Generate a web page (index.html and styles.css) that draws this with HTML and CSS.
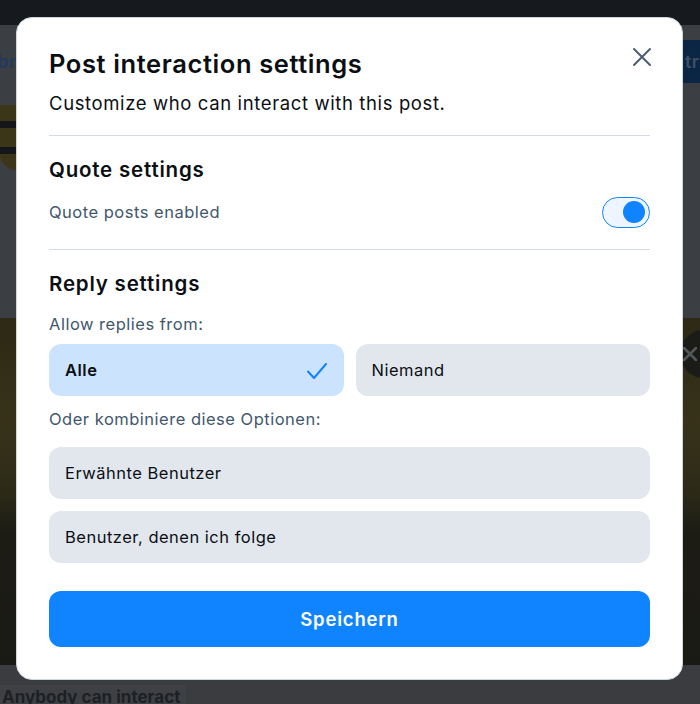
FILE: index.html
```html
<!DOCTYPE html>
<html lang="de">
<head>
<meta charset="utf-8">
<title>Post interaction settings</title>
<link rel="stylesheet" href="styles.css">
</head>
<body>
<div class="page">
  <div class="topbar"></div>
  <div class="header">
    <div class="header-row">
      <span class="header-left">br</span>
      <span class="header-btn">tra</span>
    </div>
    <div class="banner">
      <div class="stripe"></div>
      <div class="stripe"></div>
    </div>
  </div>
  <div class="media">
    <div class="media-close">
      <svg width="14" height="14" viewBox="0 0 14 14"><path d="M1 1 L13 13 M13 1 L1 13" stroke="#55585b" stroke-width="2.5" stroke-linecap="round" fill="none"/></svg>
    </div>
  </div>
  <div class="footer">
    <span class="footer-pill">Anybody can interact</span>
  </div>
</div>

<div class="modal" role="dialog">
  <button class="close" aria-label="Close">
    <svg width="20" height="20" viewBox="0 0 20 20"><path d="M2 2 L18 18 M18 2 L2 18" stroke="#4b5e73" stroke-width="2" stroke-linecap="round" fill="none"/></svg>
  </button>
  <h1 class="title">Post interaction settings</h1>
  <p class="subtitle">Customize who can interact with this post.</p>
  <div class="divider first"></div>
  <h2 class="section-title">Quote settings</h2>
  <div class="toggle-row">
    <span class="muted">Quote posts enabled</span>
    <span class="toggle"><span class="knob"></span></span>
  </div>
  <div class="divider second"></div>
  <h2 class="section-title">Reply settings</h2>
  <div class="label first-label">Allow replies from:</div>
  <div class="choice-row">
    <div class="choice selected">
      <span>Alle</span>
      <svg width="22" height="18" viewBox="0 0 22 18"><path d="M2 9.5 L8 16 L20 2" stroke="#1083fe" stroke-width="2" stroke-linecap="round" stroke-linejoin="round" fill="none"/></svg>
    </div>
    <div class="choice">
      <span>Niemand</span>
    </div>
  </div>
  <div class="label second-label">Oder kombiniere diese Optionen:</div>
  <div class="option first-option">Erwähnte Benutzer</div>
  <div class="option second-option">Benutzer, denen ich folge</div>
  <button class="save">Speichern</button>
</div>
</body>
</html>
```

FILE: styles.css
```css
* { box-sizing: border-box; }
html, body { margin: 0; padding: 0; }
body {
  width: 700px;
  height: 704px;
  overflow: hidden;
  font-family: Inter, "Noto Sans", "Liberation Sans", sans-serif;
  background: #3b3e43;
}

/* backdrop page (already dimmed) */
.page { width: 700px; height: 704px; display: flex; flex-direction: column; }
.topbar { height: 25px; background: #16191d; flex: none; }
.header { height: 293px; background: #3b3e43; flex: none; display: flex; flex-direction: column; }
.header-row { display: flex; justify-content: space-between; align-items: center; margin-top: 15px; height: 43px; }
.header-left { font-size: 18px; font-weight: 600; color: #1f3a63; margin-left: -3px; letter-spacing: 0.5px; }
.header-btn {
  background: #0b2545; color: #3f4f66; height: 43px; width: 17px; display: flex; align-items: center;
  padding-left: 2px; font-size: 18px; font-weight: 600; white-space: nowrap; overflow: hidden; letter-spacing: 0.5px;
}
.banner { margin-top: 22px; width: 30px; height: 65px; background: #3b3618; border-radius: 0 12px 12px 16px; display: flex; flex-direction: column; gap: 19px; padding-top: 16px; }
.stripe { height: 7px; background: #14161a; }
.media {
  height: 347px; flex: none; position: relative; overflow: hidden;
  background: linear-gradient(180deg, #2c2914 0%, #38321a 30%, #2c2a17 50%, #1c1c15 62%, #1a1a14 100%);
}
.media-close {
  position: absolute; left: 680px; top: 12px; width: 48px; height: 48px; border-radius: 50%;
  background: #1b1c18; display: flex; align-items: center; padding-left: 3px;
}
.media-close svg { display: block; }
.footer { flex: 1; background: #3a3c40; display: flex; align-items: flex-start; }
.footer-pill { margin-top: 20px; padding: 0 6px 0 2px; background: #3e4044; color: #1d2025; font-size: 17px; font-weight: 700; line-height: 24px; }

/* modal */
.modal {
  position: fixed; left: 16px; top: 17px; width: 667px; height: 663px;
  background: #ffffff; border: 1px solid #cfd5dd; border-radius: 16px;
  padding: 32px; display: flex; flex-direction: column;
}
.close {
  position: absolute; top: 29px; right: 30px; width: 20px; height: 20px; padding: 0; border: 0; background: none;
}
.close svg { display: block; }
.title { margin: 0; font-size: 25.5px; line-height: 28px; font-weight: 600; color: #0b0f14; letter-spacing: 0.6px; }
.subtitle { margin: 13px 0 0; font-size: 18.5px; line-height: 24px; color: #0b0f14; letter-spacing: 0.62px; }
.divider { height: 1px; background: #d4dbe2; }
.divider.first { margin-top: 20px; }
.divider.second { margin-top: 21px; }
.section-title { margin: 20px 0 0; font-size: 20.5px; line-height: 28px; font-weight: 600; color: #0b0f14; letter-spacing: 0.8px; }
.toggle-row { margin-top: 12px; display: flex; justify-content: space-between; align-items: center; height: 32px; }
.muted { font-size: 16.5px; color: #42576c; letter-spacing: 0.5px; }
.toggle {
  width: 48px; height: 31px; border-radius: 16px; border: 1px solid #1083fe; background: #eef5ff;
  display: flex; align-items: center; justify-content: flex-end; padding-right: 4px;
}
.knob { width: 22px; height: 22px; border-radius: 50%; background: #1083fe; }
.label { font-size: 16.5px; line-height: 24px; color: #42576c; letter-spacing: 0.5px; }
.first-label { margin-top: 14px; }
.second-label { margin-top: 11px; }
.choice-row { margin-top: 8px; display: flex; gap: 12px; }
.choice {
  flex: 1; height: 52px; border-radius: 12px; background: #e2e7ed; color: #0b0f14;
  display: flex; align-items: center; justify-content: space-between; padding: 0 16px; font-size: 16.5px; letter-spacing: 0.5px;
}
.choice.selected { background: #cce3fd; font-weight: 600; }
.choice.selected svg { margin-top: 1px; }
.option {
  height: 52px; border-radius: 12px; background: #e2e7ed; color: #0b0f14;
  display: flex; align-items: center; padding: 0 16px; font-size: 16.5px; letter-spacing: 0.5px;
}
.first-option { margin-top: 16px; }
.second-option { margin-top: 12px; }
.save {
  margin-top: 28px; height: 56px; border: 0; border-radius: 12px; background: #1083fe; color: #ffffff;
  font-family: inherit; font-size: 18.5px; font-weight: 600; letter-spacing: 0.8px;
}
```
